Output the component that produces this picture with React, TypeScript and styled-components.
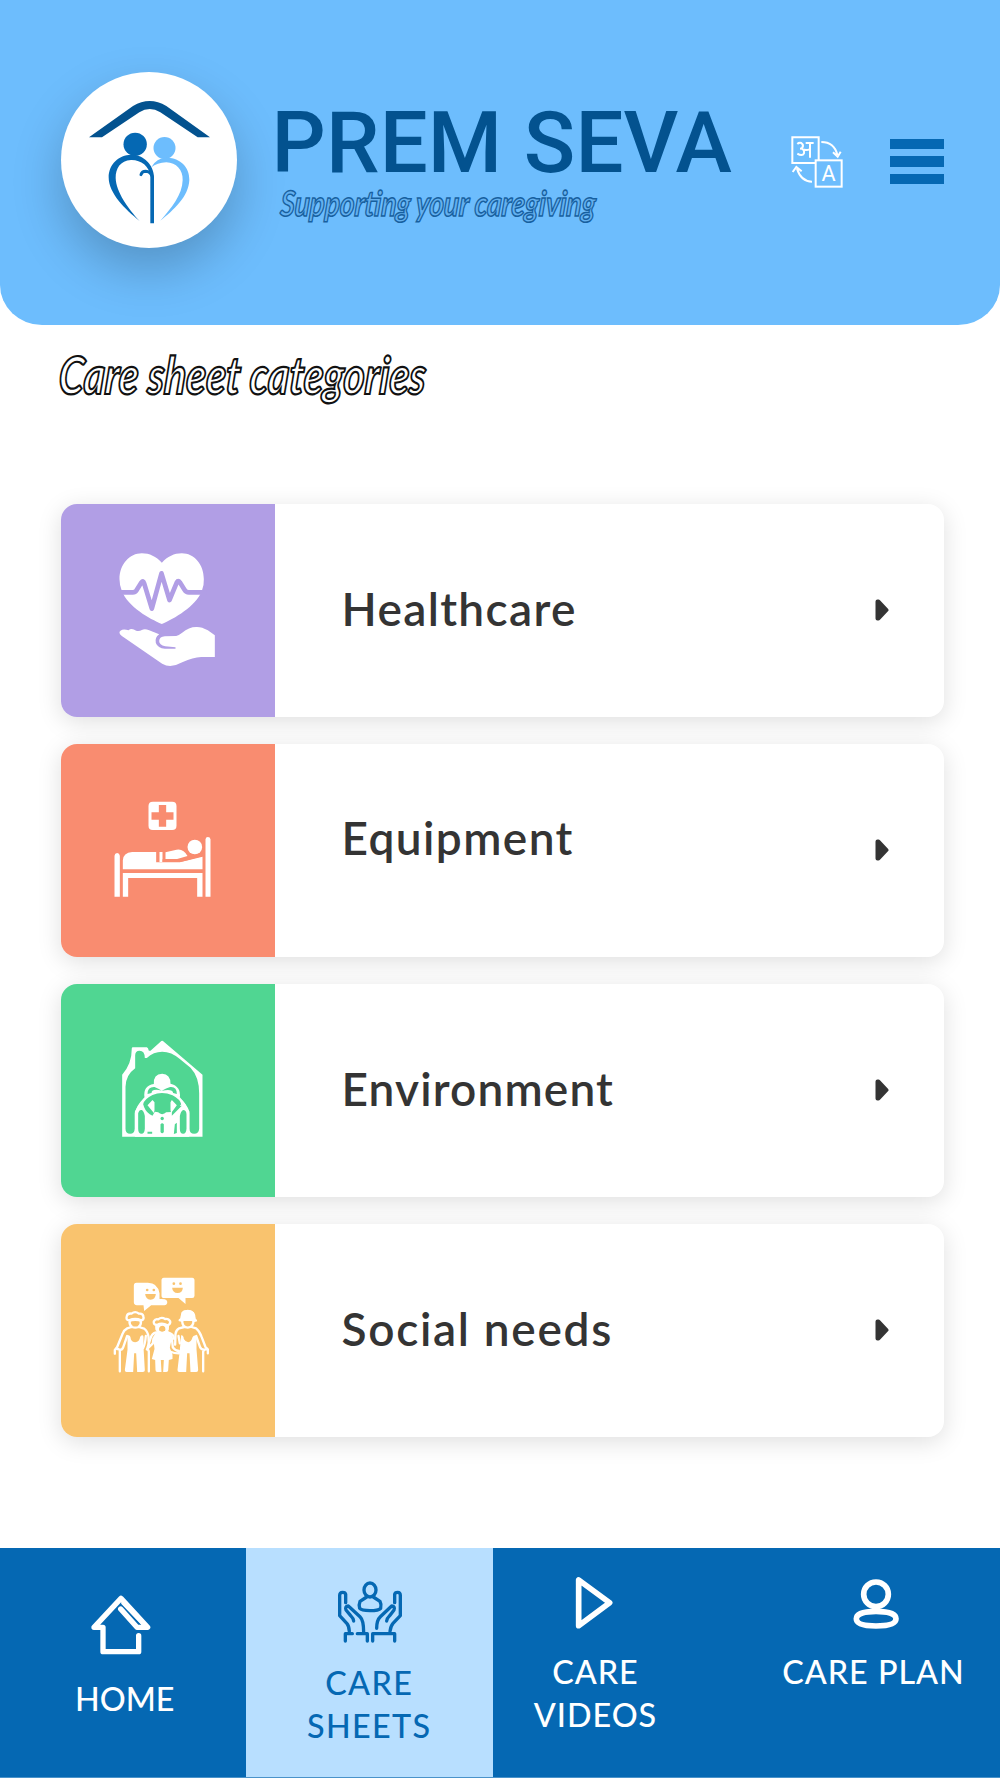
import React from "react";
import styled, { createGlobalStyle } from "styled-components";

const GlobalStyle = createGlobalStyle`
  * { box-sizing: border-box; }
  body { margin: 0; background: #fff; font-family: Lato, "Open Sans", sans-serif; }
`;

const Screen = styled.div`
  width: 1000px;
  height: 1778px;
  display: flex;
  flex-direction: column;
  overflow: hidden;
  background: #fff;
`;

const Header = styled.header`
  height: 324.5px;
  flex: none;
  display: flex;
  align-items: flex-start;
  background: #6dbdfd;
  border-radius: 0 0 42px 42px / 0 0 40px 40px;
  padding: 72px 56px 0 61px;
  overflow: hidden;
`;

const LogoDisc = styled.div`
  width: 176px;
  height: 176px;
  flex: none;
  border-radius: 50%;
  background: #fff;
  box-shadow: 0 22px 50px rgba(0, 0, 0, 0.22);
  svg { display: block; }
`;

const Brand = styled.div`
  width: 480px;
  margin: 21px 0 0 34px;
  flex: none;
`;

const BrandName = styled.h1`
  margin: 0;
  padding-left: 0.5px;
  font: 500 85px/100px Roboto, sans-serif;
  letter-spacing: 0.2px;
  color: #03528f;
  white-space: nowrap;
`;

const Handwriting = styled.div<{ $size: number; $line: number; $ink: string; $paper: string; $stroke: number; $squeeze: number }>`
  font-family: Lato, sans-serif;
  font-style: italic;
  font-weight: 700;
  font-size: ${(p) => p.$size}px;
  line-height: ${(p) => p.$line}px;
  color: ${(p) => p.$paper};
  -webkit-text-stroke: ${(p) => p.$stroke}px ${(p) => p.$ink};
  transform: scaleX(${(p) => p.$squeeze}) skewX(-5deg);
  transform-origin: 0 75%;
  white-space: nowrap;
`;

const Tagline = styled(Handwriting)`
  margin: -12px 0 0 9px;
`;

const Actions = styled.div`
  flex: 1;
  display: flex;
  align-items: center;
  justify-content: space-between;
  margin: 63.5px 0 0 40px;
`;

const MenuButton = styled.div`
  width: 54px;
  display: grid;
  gap: 7px;
  span { height: 10.5px; background: #0568b3; }
`;

const Title = styled.div`
  height: 179.5px;
  flex: none;
  padding: 17px 0 0 58px;
`;

const CardList = styled.main`
  display: flex;
  flex-direction: column;
  gap: 27px;
  padding: 0 56.5px 0 61px;
`;

const Card = styled.article`
  height: 213px;
  display: flex;
  align-items: center;
  border-radius: 16px;
  background: #fff;
  box-shadow: 0 5px 24px rgba(0, 0, 0, 0.13);
`;

const Tile = styled.div<{ $color: string }>`
  width: 213.5px;
  height: 213px;
  flex: none;
  background: ${(p) => p.$color};
  border-radius: 16px 0 0 16px;
  overflow: hidden;
  svg { display: block; }
`;

const Label = styled.div<{ $spacing: number; $raise: number }>`
  flex: 1;
  padding: 0 0 ${(p) => p.$raise}px 67px;
  font-weight: 600;
  font-size: 46px;
  line-height: 54px;
  letter-spacing: ${(p) => p.$spacing}px;
  color: #343434;
`;

const Arrow = styled.svg`
  width: 14px;
  height: 22px;
  margin: 0 55px 2px 0;
`;

const NavBar = styled.nav`
  margin-top: auto;
  height: 230px;
  flex: none;
  display: flex;
  background: #0568b3;
  border-bottom: 1px solid #4a93ca;
`;

const NavItem = styled.div<{ $width: number; $top: number; $active?: boolean; $push?: boolean; $shift?: number }>`
  width: ${(p) => p.$width}px;
  flex: none;
  margin-left: ${(p) => (p.$push ? "auto" : "0")};
  padding-top: ${(p) => p.$top}px;
  display: flex;
  flex-direction: column;
  align-items: center;
  background: ${(p) => (p.$active ? "#b8dfff" : "transparent")};
  color: ${(p) => (p.$active ? "#0568b3" : "#fff")};
  svg { display: block; margin-left: ${(p) => p.$shift ?? 0}px; }
`;

const NavText = styled.div<{ $gap: number; $spacing: number; $indent?: number }>`
  margin-top: ${(p) => p.$gap}px;
  padding-left: ${(p) => p.$indent ?? 0}px;
  font-weight: 500;
  font-size: 32.3px;
  line-height: 42.6px;
  letter-spacing: ${(p) => p.$spacing}px;
  text-align: center;
  white-space: pre-line;
`;

const Logo = () => (
  <svg width="176" height="176" viewBox="64 66 528 528">
    <path d="M148 262 L280 168 Q330 138 380 168 L511 262 H474 L362 187 Q330 167 299 187 L187 262Z" fill="#03528f" />
    <circle cx="374.500" cy="294" r="33" fill="#6dbdfd" />
    <path d="M335 352 Q350 322 384 323 C420 324 450 350 449 390 C447 440 402 480 362 512 C395 474 428 435 429 390 C430 360 410 338 380 337 Q352 338 335 352Z" fill="#6dbdfd" />
    <circle cx="286.500" cy="283" r="35" fill="#0568b3" />
    <path d="M343 520 H332 V378 C329 348 303 329 274 330 C242 332 228 355 228 384 C229 425 265 476 300 513 C256 478 207 430 207 382 C207 342 238 315 274 314 C312 313 342 345 343 380Z" fill="#0568b3" />
    <path d="M304 374 Q307 364 318 364 Q332 365 337 378" fill="none" stroke="#0568b3" strokeWidth="9" strokeLinecap="round" />
  </svg>
);

const TranslateIcon = () => (
  <svg width="52" height="52" viewBox="64 76 156 156" fill="none" stroke="#fff" strokeWidth="6">
    <path d="M137 157 H68 V80 H147 V149" />
    <rect x="138" y="149" width="78" height="79" />
    <path d="M83 100 Q88 95 95 97 Q103 102 98 111 Q95 114 91 114 M95 114 Q105 117 103 128 Q98 138 83 129 M103 116 Q111 121 121 115 M108 97 H132 M121 97 V141" strokeWidth="6" />
    <path d="M155 94 Q194 94 203 133 M190 125 L204 138 L213 123" />
    <path d="M127 213 Q94 213 82 174 M69 184 L80 169 L96 182" />
    <text x="177" y="212" textAnchor="middle" fontFamily="Roboto, sans-serif" fontSize="65" fill="#fff" stroke="none">A</text>
  </svg>
);

const HealthIcon = () => (
  <svg width="213" height="213" viewBox="34.5 42 639 639" fill="#fff">
    <path d="M337 218C320 200 300 190 277 190C240 190 210 223 210 268Q210 286 217 303C237 352 300 386 337 402C374 386 438 350 457 303Q464 286 463 268C463 223 434 190 397 190C374 190 354 200 337 218Z" />
    <path d="M204 307H250Q257 307 261 301L276 277Q281 270 284 280L307 356L336 250L360 330L382 277Q386 270 391 277L405 299Q410 307 418 307H470" fill="none" stroke="#b19ee5" strokeWidth="14" strokeLinejoin="round" />
    <path d="M213 422Q221 416 237 421Q246 413 260 422Q270 424 277 420Q286 415 299 421L329 433Q315 443 319 459Q325 475 346 476H378V472L347 469Q329 465 329 453Q330 440 346 439L380 438Q388 436 398 428Q418 411 440 411Q456 410 475 421L496 436V501H455Q430 502 400 516Q380 527 362 528Q350 528 338 521L217 438Q205 428 213 422Z" />
  </svg>
);

const BedIcon = () => (
  <svg width="213" height="213" viewBox="34.5 12 639 639" fill="#fff">
    <path fillRule="evenodd" d="M310 185H368Q381 185 381 198V257Q381 270 368 270H310Q297 270 297 257V198Q297 185 310 185ZM328 195V217H306V239H328V260H350V239H372V217H350V195Z" />
    <path d="M195 470V347Q196 340 203 339Q210 340 211 347V470ZM468 470V298Q469 291 475 291Q482 291 483 298V470ZM220 470V399H459V470H443V414H236V470Z" />
    <circle cx="436" cy="321" r="22" />
    <path d="M220 388V361Q221 338 248 336H320V367H391L459 350V388Z" />
    <path d="M330 336H339V366H330ZM348 337L381 329Q402 325 414 348L383 357H348Z" />
    <path d="M339 362H382Q397 362 415 356L459 344" fill="none" stroke="#f98c70" strokeWidth="8" />
  </svg>
);

const HouseIcon = () => (
  <svg width="213" height="213" viewBox="34.5 12 639 639" fill="#fff">
    <path d="M218 470V284Q247 252 247 204Q247 202 250 202H292Q296 203 298 212H303L333 185Q338 180 343 185L459 284V470Z" />
    <path fill="#50d692" d="M228 320Q229 285 257 265V226Q257 212 270 212Q286 212 286 234H292Q312 215 338 215Q366 215 391 237L423 263Q449 290 449 340V446Q448 461 434 461Q420 461 420 446V395Q410 370 394 358H282Q265 375 256 395V446Q255 461 242 461Q228 461 228 446Z" />
    <path d="M256 470V400Q260 378 285 352Q280 317 313 312Q311 282 338 281Q363 282 363 311Q395 319 391 352Q413 375 419 400V470Z" />
    <path fill="#50d692" d="M294 342Q294 320 315 321Q327 326 337 332Q350 325 362 321Q382 319 382 342L371 339Q370 326 338 332Q307 324 306 339Z" />
    <path fill="#50d692" d="M281 373Q283 358 309 345Q338 333 369 346Q392 358 395 373L391 378L397 377L367 407V396L350 397Q345 402 338 403Q331 402 326 397L316 395L309 407Q291 400 284 382Z" />
    <path d="M313 399L294 376L309 360L315 367V391ZM363 391V367L367 360L382 376L365 399Z" />
    <path d="M266 446V400Q269 388 277 390Q283 393 286 408V446Q285 461 276 461Q266 461 266 446ZM391 446V408Q394 393 401 390Q410 390 411 402V446Q410 461 401 461Q391 461 391 446ZM333 433Q338 426 343 433V456Q338 464 333 456ZM376 433L382 428V459L373 462ZM294 455H308V461H294Z" fill="#50d692" />
    <circle cx="338" cy="415.500" r="5" fill="#50d692" />
  </svg>
);

const PeopleIcon = () => (
  <svg width="213" height="213" viewBox="34.5 12 639 639" fill="#fff">
    <path d="M261 188H295Q325 188 330 220V237Q339 236 346 238Q355 241 353 250Q351 256 345 256H305L284 273L282 256H262Q253 255 253 247V197Q253 188 261 188Z" />
    <path d="M343 173H428Q435 173 435 181V227Q435 234 428 234H408V252L387 234H344Q336 234 336 227V181Q336 173 343 173Z" />
    <g fill="#f9c36e">
      <circle cx="293" cy="210" r="4" /><circle cx="313" cy="210" r="4" />
      <path d="M287 222H319Q318 239 303 239Q288 238 287 222Z" />
      <circle cx="373" cy="191" r="4" /><circle cx="393" cy="191" r="4" />
      <path d="M368 203H400Q399 219 384 219Q369 218 368 203Z" />
    </g>
    <g fill="none" stroke="#fff" strokeWidth="7" strokeLinecap="round" strokeLinejoin="round">
      <path d="M239 301Q228 301 232 288Q235 279 246 281Q257 272 268 281Q280 279 282 290Q284 299 275 301Q257 293 239 301ZM240 303Q239 315 248 321Q257 325 267 321Q276 315 274 303M246 321L233 325Q223 330 219 342L203 381L196 390V401M268 321L284 326Q294 333 297 350L298 378" />
      <path d="M203 387Q211 386 211 395V454M211 390Q219 389 221 382L233 348M289 348Q287 372 281 384M292 388Q299 389 298 398V454" />
      <path d="M322 315Q311 315 313 304Q318 295 326 298Q336 290 347 297Q357 295 362 304Q364 313 354 316Q338 307 322 315ZM321 317Q320 331 328 335M355 317Q356 331 349 335M320 337Q307 340 303 355L294 383M355 337Q373 342 374 357" />
      <path d="M398 303Q398 322 415 323Q432 321 432 303M404 321L389 325Q379 331 378 342L377 374M426 321L440 325Q450 333 456 350L468 381L475 388V400M387 348L391 370M440 348L452 382Q455 389 463 389M469 388Q461 388 461 396V454" />
      <path d="M367 354L370 382Q376 391 388 393V400Q373 400 365 396M312 355L310 370L293 387" />
      <path d="M396 298Q395 273 415 273Q436 273 435 298" />
    </g>
    <path d="M239 300Q257 290 276 300V307Q257 299 239 307ZM318 315Q338 306 357 315V331L346 336Q352 318 338 317Q325 319 330 336L318 331Z" />
    <path d="M396 277Q401 269 415 270Q431 271 435 282L438 296Q444 298 443 304Q432 309 427 303H403Q397 307 387 303Q386 297 393 295Z" />
    <path d="M234 346Q243 344 244 358Q248 367 257 367Q270 365 272 350Q280 342 282 350V380L286 451Q286 456 280 456H263L260 400H254L251 456H231Q226 456 226 450L234 389ZM395 346Q402 345 403 357Q409 367 416 367Q426 366 429 352Q434 342 441 350V388L446 449Q446 456 440 456H423L420 400H413L410 456H389Q384 456 384 450L391 389Z" />
    <path d="M323 333H352Q370 338 367 355L361 383L369 404V417L358 420L356 451Q356 456 350 456H341L343 420H334L336 456H323Q318 456 318 450L317 420L307 417L315 387L311 350Z" />
    <circle cx="338" cy="327" r="8" fill="#f9c36e" />
  </svg>
);

const HomeIcon = () => (
  <svg width="60" height="60" viewBox="273 165 180 180" fill="none" stroke="#fff" strokeWidth="16" strokeLinecap="round" strokeLinejoin="round">
    <path d="M416 287V335H309V262H282L363 175L443 262H411L362 207" />
    <path d="M366 190L430 257" strokeWidth="5" />
  </svg>
);

const SheetsIcon = () => (
  <svg width="66" height="62" viewBox="1011 123 198 186" fill="none" stroke="#0568b3" strokeWidth="10" strokeLinecap="round" strokeLinejoin="round">
    <ellipse cx="1110" cy="150" rx="18" ry="21" />
    <path d="M1100 171L1080 184Q1076 193 1079 205Q1084 212 1110 212Q1136 212 1142 205Q1145 193 1140 184L1120 171" />
    <path d="M1037 188V163Q1036 157 1028 157Q1019 157 1019 166V227L1041 251Q1047 258 1048 274" />
    <path d="M1061 243Q1061 236 1052 227L1038 210Q1034 199 1045 198L1080 230Q1091 240 1091 277" />
    <path d="M1036 303V281H1057M1072 281H1102V303" />
    <path d="M1184 188V163Q1185 157 1193 157Q1201 157 1201 166V227L1179 250Q1172 258 1170 274" />
    <path d="M1160 243Q1160 236 1169 227L1182 210Q1186 199 1175 198L1141 230Q1130 240 1130 265" />
    <path d="M1118 303V281H1184V303" />
  </svg>
);

const PlayIcon = () => (
  <svg width="38" height="52" viewBox="229 110 114 156">
    <path d="M240 119V256L333 187Z" fill="none" stroke="#fff" strokeWidth="17" strokeLinejoin="round" />
  </svg>
);

const PersonIcon = () => (
  <svg width="46" height="50" viewBox="1057 117 138 150" fill="none" stroke="#fff" strokeWidth="17">
    <circle cx="1126" cy="163" r="37" />
    <path d="M1126 214C1158 214 1186 220 1186 236.500C1186 253 1158 258 1126 258S1067 253 1067 236.500C1067 220 1095 214 1126 214Z" />
  </svg>
);

const categories = [
  { label: "Healthcare", color: "#b19ee5", icon: <HealthIcon />, spacing: 1.35, raise: 4 },
  { label: "Equipment", color: "#f98c70", icon: <BedIcon />, spacing: 1.4, raise: 26 },
  { label: "Environment", color: "#50d692", icon: <HouseIcon />, spacing: 1.15, raise: 4 },
  { label: "Social needs", color: "#f9c36e", icon: <PeopleIcon />, spacing: 1.7, raise: 4 },
];

export default function App() {
  return (
    <>
      <GlobalStyle />
      <Screen>
        <Header>
          <LogoDisc><Logo /></LogoDisc>
          <Brand>
            <BrandName>PREM SEVA</BrandName>
            <Tagline $size={35} $line={42} $ink="#17609f" $paper="#64b1f0" $stroke={1.5} $squeeze={0.8}>
              Supporting your caregiving
            </Tagline>
          </Brand>
          <Actions>
            <TranslateIcon />
            <MenuButton><span /><span /><span /></MenuButton>
          </Actions>
        </Header>
        <Title>
          <Handwriting $size={52} $line={64} $ink="#111" $paper="#fff" $stroke={2.2} $squeeze={0.785}>
            Care sheet categories
          </Handwriting>
        </Title>
        <CardList>
          {categories.map((c) => (
            <Card key={c.label}>
              <Tile $color={c.color}>{c.icon}</Tile>
              <Label $spacing={c.spacing} $raise={c.raise}>{c.label}</Label>
              <Arrow viewBox="0 0 14 22">
                <path d="M2.500 2.500V19.500L3.500 19.500L11.500 11L3.500 2.500Z" fill="#343434" stroke="#343434" strokeWidth="4" strokeLinejoin="round" />
              </Arrow>
            </Card>
          ))}
        </CardList>
        <NavBar>
          <NavItem $width={245.5} $top={47} $shift={-3}>
            <HomeIcon />
            <NavText $gap={23} $spacing={0} $indent={4}>HOME</NavText>
          </NavItem>
          <NavItem $width={247.5} $top={33} $active $shift={2}>
            <SheetsIcon />
            <NavText $gap={19} $spacing={1.4}>{"CARE\nSHEETS"}</NavText>
          </NavItem>
          <NavItem $width={205} $top={29} $shift={-3}>
            <PlayIcon />
            <NavText $gap={22} $spacing={1}>{"CARE\nVIDEOS"}</NavText>
          </NavItem>
          <NavItem $width={256} $top={31} $push $shift={7}>
            <PersonIcon />
            <NavText $gap={22} $spacing={1} $indent={3}>CARE PLAN</NavText>
          </NavItem>
        </NavBar>
      </Screen>
    </>
  );
}
